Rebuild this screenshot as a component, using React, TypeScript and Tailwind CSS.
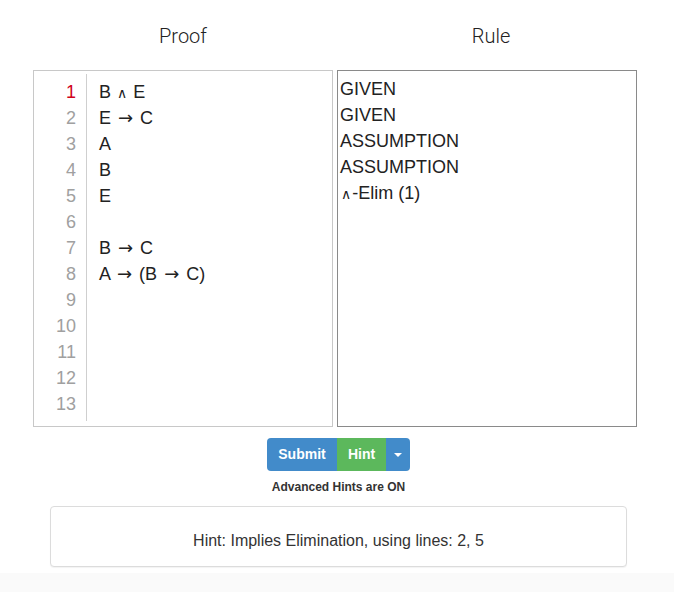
import React from 'react';

const proofLines = ['B ∧ E', 'E → C', 'A', 'B', 'E', '', 'B → C', 'A → (B → C)', '', '', '', '', ''];
const rules = ['GIVEN', 'GIVEN', 'ASSUMPTION', 'ASSUMPTION', '∧-Elim (1)'];

// logic symbols render smaller/tighter than the surrounding letters
function Formula({ text }: { text: string }) {
  return (
    <>
      {text.split(/([∧→])/).map((part, i) =>
        part === '∧' ? (
          <span key={i} className="mx-[1px] text-[14px] font-['DejaVu_Sans',sans-serif]">∧</span>
        ) : part === '→' ? (
          <span key={i} className="mx-[2px] text-[18px] font-['DejaVu_Sans',sans-serif]">→</span>
        ) : (
          <span key={i}>{part}</span>
        )
      )}
    </>
  );
}

export default function App() {
  return (
    <div className="min-h-[592px] bg-white text-[#333] font-['Liberation_Sans',Arial,sans-serif]">
      {/* Column headers */}
      <div className="flex gap-[4px] px-[33px] pt-[23px] font-['Roboto',sans-serif]">
        <div className="w-[300px] text-center text-[20px] leading-[26px] font-light text-[#222]">Proof</div>
        <div className="w-[300px] pl-[8px] text-center text-[20px] leading-[26px] font-light text-[#222]">Rule</div>
      </div>

      {/* Proof & rule panes */}
      <div className="flex gap-[4px] px-[33px] mt-[21px]">
        <div className="flex h-[357px] w-[300px] border border-[#c8c8c8] bg-white">
          <div className="w-[53px] mt-[3px] mb-[5px] border-r border-[#cfcfcf] pr-[10px] pt-[5px] text-right text-[18px] leading-[26px]">
            {proofLines.map((_, i) => (
              <div key={i} className={i === 0 ? 'text-[#d0021b]' : 'text-[#a0a0a0]'}>
                {i + 1}
              </div>
            ))}
          </div>
          <div className="flex-1 pl-[12px] pt-[8px] text-[18px] leading-[26px] text-[#222]">
            {proofLines.map((line, i) => (
              <div key={i} className="h-[26px] whitespace-pre">
                <Formula text={line} />
              </div>
            ))}
          </div>
        </div>
        <div className="h-[357px] w-[300px] border border-[#8a8a8a] bg-white pl-[2px] pt-[5px] text-[18px] leading-[26px] text-[#222]">
          {rules.map((r, i) => (
            <div key={i}>
              <Formula text={r} />
            </div>
          ))}
        </div>
      </div>

      {/* Actions */}
      <div className="mt-[11px] flex justify-center pl-[3px]">
        <div className="flex h-[33px] overflow-hidden rounded-[4px] text-[14px] font-bold text-white">
          <button className="w-[70px] bg-[#428bca]">Submit</button>
          <button className="w-[49px] bg-[#5cb85c]">Hint</button>
          <button className="flex w-[24px] items-center justify-center bg-[#428bca]">
            <span className="block h-0 w-0 border-x-[4px] border-t-[4px] border-x-transparent border-t-white" />
          </button>
        </div>
      </div>
      <div className="mt-[9px] pl-[3px] text-center text-[12px] font-bold leading-[15px] text-[#333]">
        Advanced Hints are ON
      </div>

      {/* Hint panel */}
      <div className="mx-[47px] mt-[11px] ml-[50px] flex h-[61px] items-center justify-center rounded-[4px] border border-[#dcdcdc] bg-white pt-[8px] text-[16px] text-[#333] shadow-[0_1px_1px_rgba(0,0,0,0.05)]">
        Hint: Implies Elimination, using lines: 2, 5
      </div>

      <div className="mt-[6px] h-[20px] bg-[#fafafa]" />
    </div>
  );
}
